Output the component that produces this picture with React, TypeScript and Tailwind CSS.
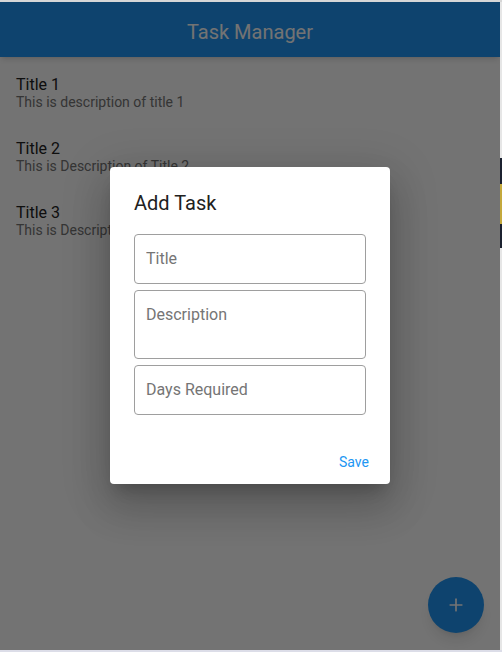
import { Plus } from "lucide-react";

const tasks = [
  { title: "Title 1", description: "This is description of title 1" },
  { title: "Title 2", description: "This is Description of Title 2" },
  { title: "Title 3", description: "This is Description of Title 3" },
];

export default function App() {
  return (
    <div className="w-[502px] h-[652px] flex flex-col bg-[#dfe0e6] font-['Roboto',sans-serif] overflow-hidden">
      <div className="h-[2px] bg-[#d6d6d6]" />
      <div className="flex flex-1 min-h-0">
        {/* App surface */}
        <div className="relative w-[500px] h-full bg-white overflow-hidden">
          <header className="h-[55px] bg-[#2196f3] flex items-center justify-center shadow-md">
            <h1 className="text-[20px] text-white pt-[4px]">Task Manager</h1>
          </header>

          <ul className="pt-[4px]">
            {tasks.map((task) => (
              <li key={task.title} className="px-4 py-[14px]">
                <p className="text-[16px] leading-[19px] text-[#222]">{task.title}</p>
                <p className="text-[14px] leading-[17px] text-[#757575]">{task.description}</p>
              </li>
            ))}
          </ul>

          <button className="absolute right-[16px] bottom-[17px] w-[56px] h-[56px] rounded-full bg-[#2196f3] flex items-center justify-center shadow-lg">
            <Plus className="w-[20px] h-[20px] text-white" strokeWidth={2} />
          </button>

          {/* Backdrop + dialog */}
          <div className="absolute inset-0 bg-black/55 flex items-center justify-center pb-[2px]">
            <div className="w-[280px] bg-white rounded-[4px] shadow-[0_11px_15px_-7px_rgba(0,0,0,0.2),0_24px_38px_3px_rgba(0,0,0,0.14),0_9px_46px_8px_rgba(0,0,0,0.12)] flex flex-col">
              <h2 className="px-6 pt-6 text-[20px] leading-[24px] text-[#212121]">Add Task</h2>
              <div className="px-6 pt-[19px] flex flex-col gap-[6px]">
                <input
                  placeholder="Title"
                  className="h-[50px] w-full rounded-[4px] border border-[#9e9e9e] px-[11px] text-[16px] text-[#212121] placeholder:text-[#757575] outline-none"
                />
                <textarea
                  placeholder="Description"
                  className="h-[69px] w-full rounded-[4px] border border-[#9e9e9e] px-[11px] pt-[14px] text-[16px] leading-[20px] text-[#212121] placeholder:text-[#757575] outline-none resize-none"
                />
                <input
                  placeholder="Days Required"
                  className="h-[50px] w-full rounded-[4px] border border-[#9e9e9e] px-[11px] text-[16px] text-[#212121] placeholder:text-[#757575] outline-none"
                />
              </div>
              <div className="flex justify-end pt-[30px] pb-[3px] pr-[13px]">
                <button className="h-[36px] px-2 text-[14px] text-[#2196f3]">Save</button>
              </div>
            </div>
          </div>
        </div>

        {/* Sliver of neighbouring window */}
        <div className="w-[2px] h-full bg-[#e6e6e6] flex flex-col">
          <div className="h-[156px]" />
          <div className="h-[26px] bg-[#1c2230]" />
          <div className="h-[40px] bg-[#c4a93c]" />
          <div className="h-[24px] bg-[#1c2230]" />
        </div>
      </div>
      <div className="h-[2px] bg-[#dcdde8]" />
    </div>
  );
}
